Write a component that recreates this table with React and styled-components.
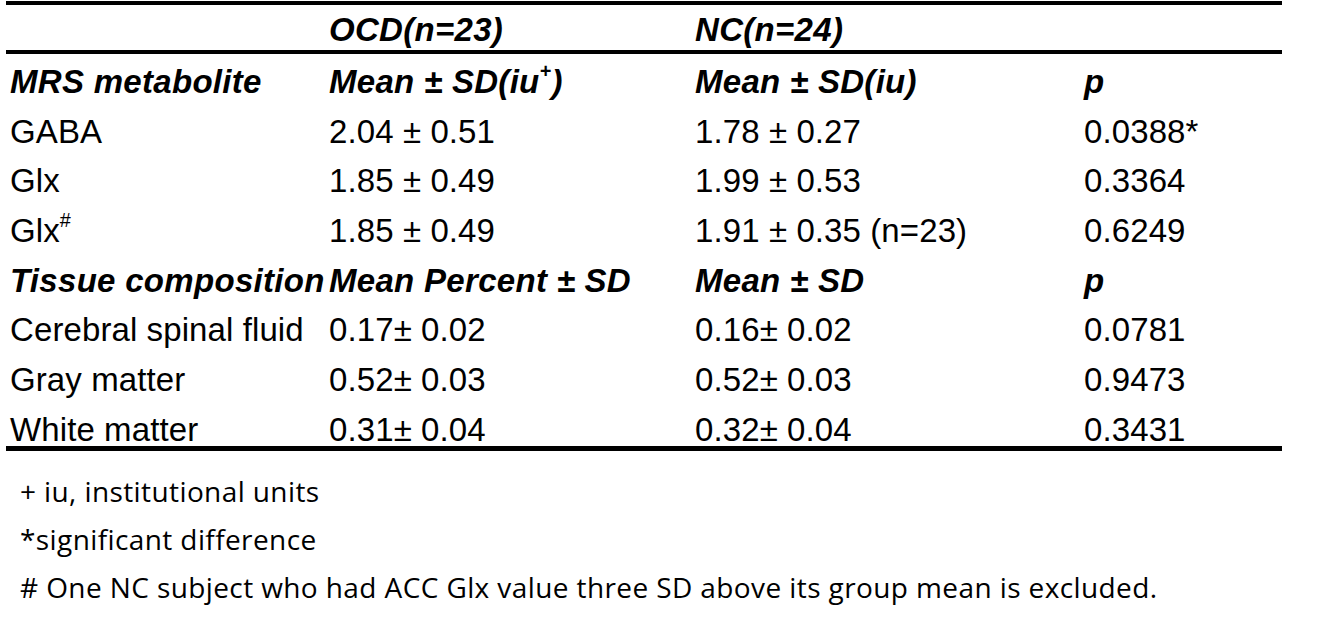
import React from "react"
import styled, { createGlobalStyle } from "styled-components"

const Global = createGlobalStyle`
  html, body {
    margin: 0;
    padding: 0;
    background: #ffffff;
  }
`

const Page = styled.div`
  width: 1327px;
  height: 627px;
  background: #fff;
  padding: 1px 0 0 6px;
  box-sizing: border-box;
  overflow: hidden;
`

const Table = styled.div`
  width: 1276px;
  border-top: 4px solid #000;
  border-bottom: 5px solid #000;
  font-family: "Liberation Sans", Arial, sans-serif;
  color: #000;
`

const HeadRow = styled.div`
  display: grid;
  grid-template-columns: 323px 366px 389px 1fr;
  height: 49px;
  padding-top: 7px;
  box-sizing: border-box;
  border-bottom: 4px solid #000;
`

const Row = styled.div`
  display: grid;
  grid-template-columns: 323px 366px 389px 1fr;
  height: ${(p) => (p.$last ? 44 : 49.7)}px;
  padding-top: 10px;
  box-sizing: border-box;
`

const Cell = styled.div`
  font-size: 33px;
  line-height: 36px;
  white-space: nowrap;
  padding-left: ${(p) => (p.$first ? 4 : 0)}px;
  font-weight: ${(p) => (p.$head ? 700 : 400)};
  font-style: ${(p) => (p.$head ? "italic" : "normal")};
  letter-spacing: ${(p) => (p.$head ? "0.3px" : "0.1px")};
`

const Sup = styled.sup`
  font-size: 0.6em;
  line-height: 0;
  vertical-align: 0.75em;
`

const Notes = styled.div`
  padding: 16px 0 0 14px;
  display: flex;
  flex-direction: column;
  font-family: "Open Sans", "Liberation Sans", sans-serif;
  font-size: 28px;
  color: #000;
`

const Note = styled.div`
  height: 48px;
  line-height: 48px;
  white-space: nowrap;
  letter-spacing: 0.4px;
`

const rows = [
  { head: true, cells: ["MRS metabolite", <>Mean ± SD(iu<Sup>+</Sup>)</>, "Mean ± SD(iu)", "p"] },
  { cells: ["GABA", "2.04 ± 0.51", "1.78 ± 0.27", "0.0388*"] },
  { cells: ["Glx", "1.85 ± 0.49", "1.99 ± 0.53", "0.3364"] },
  { cells: [<>Glx<Sup>#</Sup></>, "1.85 ± 0.49", "1.91 ± 0.35 (n=23)", "0.6249"] },
  { head: true, cells: ["Tissue composition", "Mean Percent ± SD", "Mean ± SD", "p"] },
  { cells: ["Cerebral spinal fluid", "0.17± 0.02", "0.16± 0.02", "0.0781"] },
  { cells: ["Gray matter", "0.52± 0.03", "0.52± 0.03", "0.9473"] },
  { cells: ["White matter", "0.31± 0.04", "0.32± 0.04", "0.3431"] },
]

export default function App() {
  return (
    <Page>
      <Global />
      <Table>
        <HeadRow>
          <Cell $first />
          <Cell $head>OCD(n=23)</Cell>
          <Cell $head>NC(n=24)</Cell>
          <Cell />
        </HeadRow>
        {rows.map((r, i) => (
          <Row key={i} $last={i === rows.length - 1}>
            {r.cells.map((c, j) => (
              <Cell key={j} $head={r.head} $first={j === 0}>
                {c}
              </Cell>
            ))}
          </Row>
        ))}
      </Table>
      <Notes>
        <Note>+ iu, institutional units</Note>
        <Note>*significant difference</Note>
        <Note># One NC subject who had ACC Glx value three SD above its group mean is excluded.</Note>
      </Notes>
    </Page>
  )
}
